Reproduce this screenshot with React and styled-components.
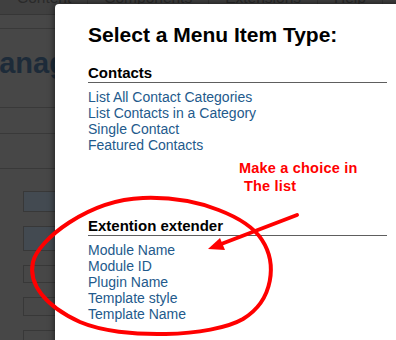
import styled, { createGlobalStyle } from "styled-components";

const GlobalStyle = createGlobalStyle`
  body {
    margin: 0;
    font-family: "Liberation Sans", Arial, sans-serif;
  }
`;

const contacts = [
  "List All Contact Categories",
  "List Contacts in a Category",
  "Single Contact",
  "Featured Contacts",
];

const extender = [
  "Module Name",
  "Module ID",
  "Plugin Name",
  "Template style",
  "Template Name",
];

const boxes = [
  { h: 21, filled: true },
  { h: 25, filled: true },
  { h: 18 },
  { h: 19 },
  { h: 20 },
];

export default function App() {
  return (
    <>
      <GlobalStyle />
      <Page>
        <MenuBar>
          <MenuItem>Content</MenuItem>
          <MenuItem>Components</MenuItem>
          <MenuItem>Extensions</MenuItem>
          <MenuItem>Help</MenuItem>
        </MenuBar>
        <SubBar />
        <HeaderArea>
          <PageTitle>Manager</PageTitle>
        </HeaderArea>
        <Row h={25} />
        <Row h={34} />
        <BoxList>
          {boxes.map((b, i) => (
            <Box key={i} h={b.h} filled={b.filled} />
          ))}
        </BoxList>

        <Modal>
          <Title>Select a Menu Item Type:</Title>
          <Sections>
            <Section>
              <SectionHead>Contacts</SectionHead>
              <LinkList>
                {contacts.map((c) => (
                  <li key={c}><Link href="#">{c}</Link></li>
                ))}
              </LinkList>
            </Section>
            <Section>
              <SectionHead>Extention extender</SectionHead>
              <LinkList>
                {extender.map((c) => (
                  <li key={c}><Link href="#">{c}</Link></li>
                ))}
              </LinkList>
            </Section>
          </Sections>
        </Modal>

        <Note>
          <div>Make a choice in</div>
          <NoteLine>The list</NoteLine>
        </Note>

        <Scribble viewBox="0 0 396 340" width="396" height="340">
          <path
            d="M143 198 C200 196, 248 218, 262 240 C277 263, 274 300, 243 319 C212 337, 122 340, 80 322 C45 306, 28 284, 33 262 C38 240, 88 200, 143 198 Z"
            fill="none"
            stroke="#ff0000"
            strokeWidth="4"
          />
          <line x1="297" y1="215" x2="216" y2="246" stroke="#ff0000" strokeWidth="4" strokeLinecap="round" />
          <polygon points="208,249 220,238 225,250" fill="#ff0000" />
        </Scribble>
      </Page>
    </>
  );
}

const Page = styled.div`
  position: relative;
  width: 396px;
  height: 340px;
  overflow: hidden;
  background: #474747;
`;

const MenuBar = styled.div`
  height: 14px;
  display: flex;
  background: #404040;
  border-bottom: 1px solid #363636;
`;

const MenuItem = styled.div`
  margin-top: -10px;
  padding: 0 16px;
  font-size: 15.5px;
  line-height: 15px;
  color: #2a2a2a;
  border-right: 1px solid #363636;

  &:first-child {
    padding-left: 17px;
  }
`;

const SubBar = styled.div`
  height: 13px;
  border-bottom: 1px solid #393939;
`;

const HeaderArea = styled.div`
  height: 60px;
  padding-top: 18px;
  border-bottom: 1px solid #393939;
`;

const PageTitle = styled.div`
  margin-left: -25px;
  font-size: 29px;
  line-height: 32px;
  font-weight: bold;
  color: #1d2b39;
`;

const Row = styled.div`
  height: ${(p) => p.h}px;
  border-bottom: 1px solid #393939;
`;

const BoxList = styled.div`
  display: flex;
  flex-direction: column;
  gap: 14px;
  padding: 22px 0 0 23px;
`;

const Box = styled.div`
  width: 80px;
  height: ${(p) => p.h}px;
  box-sizing: border-box;
  border: 1px solid #383838;
  background: ${(p) => (p.filled ? "#434a51" : "transparent")};
`;

const Modal = styled.div`
  position: absolute;
  left: 55px;
  top: 4px;
  width: 360px;
  height: 346px;
  box-sizing: border-box;
  padding: 19px 0 0 33px;
  background: #ffffff;
  border-radius: 4px 0 0 0;
  box-shadow: 0 0 7px rgba(0, 0, 0, 0.65);
`;

const Title = styled.h2`
  margin: 0 0 17px;
  font-size: 21px;
  line-height: 24px;
  font-weight: bold;
  color: #000;
`;

const Sections = styled.div`
  display: flex;
  flex-direction: column;
  gap: 64px;
  width: 299px;
`;

const Section = styled.div``;

const SectionHead = styled.h3`
  margin: 0 0 6px;
  font-size: 15px;
  line-height: 18px;
  font-weight: bold;
  color: #000;
  border-bottom: 1px solid #5e5e5e;
`;

const LinkList = styled.ul`
  list-style: none;
  margin: 0;
  padding: 0;
`;

const Link = styled.a`
  display: block;
  font-size: 14px;
  line-height: 16px;
  color: #235a8c;
  text-decoration: none;
`;

const Note = styled.div`
  position: absolute;
  left: 239px;
  top: 159px;
  font-size: 14.5px;
  line-height: 18px;
  font-weight: bold;
  letter-spacing: 0.2px;
  color: #ff0000;
`;

const NoteLine = styled.div`
  padding-left: 5px;
`;

const Scribble = styled.svg`
  position: absolute;
  left: 0;
  top: 0;
  pointer-events: none;
`;
